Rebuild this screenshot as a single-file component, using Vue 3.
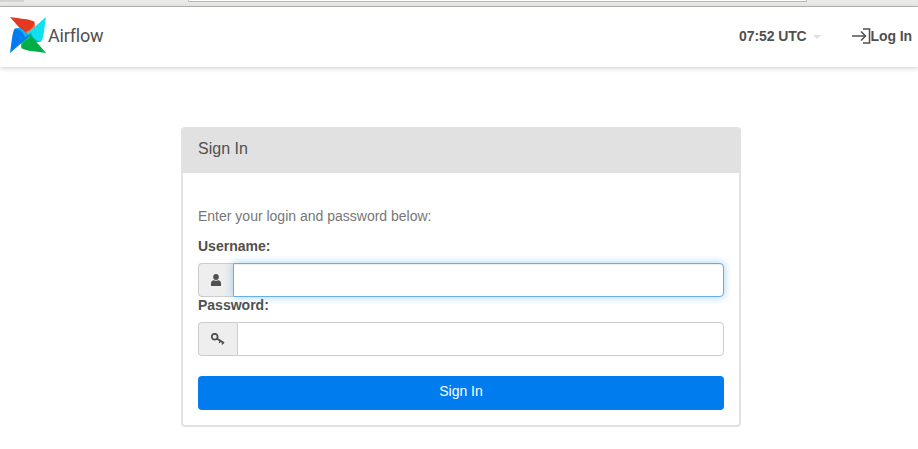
<template>
  <div class="page">
    <div class="browser-strip">
      <div class="browser-strip__tab"></div>
      <div class="browser-strip__address"></div>
    </div>

    <nav class="navbar">
      <a class="brand" href="#">
        <svg class="brand__logo" width="36" height="36" viewBox="0 0 36 36">
          <g v-for="blade in blades" :key="blade.main" :transform="`rotate(${blade.angle} 18 18)`">
            <path d="M0 0 L16.5 19 L18 18 C23 14 27 9 24 4.5 C20 2 9 1.5 0 0Z" :fill="blade.main" />
            <path d="M18 18 C23 14 27 9 24 4.5 C24.5 10 21 13 15.5 15Z" :fill="blade.accent" />
          </g>
        </svg>
        <span class="brand__name">Airflow</span>
      </a>

      <div class="navbar__right">
        <div class="clock">
          <span>07:52 UTC</span>
          <span class="clock__caret"></span>
        </div>
        <a class="login" href="#">
          <svg width="19" height="16" viewBox="0 0 19 16" fill="none" stroke="#51504f" stroke-width="1.5">
            <path d="M0 8 H13" />
            <path d="M9 3.5 L13.5 8 L9 12.5" />
            <path d="M11 1 H17.5 V15 H11" />
          </svg>
          <span>Log In</span>
        </a>
      </div>
    </nav>

    <main class="content">
      <section class="panel">
        <header class="panel__heading">Sign In</header>
        <form class="panel__body" @submit.prevent>
          <p class="panel__hint">Enter your login and password below:</p>

          <label class="field-label" for="username">Username:</label>
          <div class="input-group">
            <span class="input-group__addon input-group__addon--user">
              <svg width="10" height="12" viewBox="0 0 10 12" fill="#51504f">
                <ellipse cx="5" cy="3" rx="2.8" ry="3" />
                <path d="M0 12 V9 C0 7.4 1.4 6.4 3 6.2 C4.2 7 5.8 7 7 6.2 C8.6 6.4 10 7.4 10 9 V12Z" />
              </svg>
            </span>
            <input id="username" v-model="username" class="input-group__input input-group__input--focus" type="text" />
          </div>

          <label class="field-label field-label--password" for="password">Password:</label>
          <div class="input-group">
            <span class="input-group__addon input-group__addon--key">
              <svg width="14" height="12" viewBox="0 0 14 12" fill="none" stroke="#51504f">
                <circle cx="3.7" cy="3.7" r="2.9" stroke-width="1.8" />
                <path d="M5.8 5.5 L13 10" stroke-width="2" />
                <path d="M9.5 7.8 L8.2 9.8 M12 9.5 L11 11.5" stroke-width="1.5" />
              </svg>
            </span>
            <input id="password" v-model="password" class="input-group__input" type="password" />
          </div>

          <button class="submit" type="submit">Sign In</button>
        </form>
      </section>
    </main>
  </div>
</template>

<script setup>
import { ref } from 'vue'

const username = ref('')
const password = ref('')

const blades = [
  { angle: 0, main: '#e43921', accent: '#ff7557' },
  { angle: 90, main: '#11e1ee', accent: '#00b8c9' },
  { angle: 180, main: '#00ad46', accent: '#04d659' },
  { angle: 270, main: '#017cee', accent: '#0cb6ff' }
]
</script>

<style>
html,
body {
  margin: 0;
  background: #fff;
  overflow: hidden;
}
</style>

<style scoped>
.page {
  font-family: "Liberation Sans", Arial, sans-serif;
  font-size: 14px;
  color: #51504f;
  height: 449px;
}

.browser-strip {
  position: relative;
  height: 6px;
  background: #e9e9e7;
  border-bottom: 1px solid #b9b9b5;
  display: flex;
}

.browser-strip__tab {
  width: 24px;
  height: 2px;
  background: #d3d3d1;
}

.browser-strip__address {
  margin-left: 164px;
  width: 617px;
  height: 1px;
  background: #fff;
  border: 1px solid #b5b5b1;
  border-top: 0;
  border-radius: 0 0 3px 3px;
}

.navbar {
  position: relative;
  height: 60px;
  background: #fff;
  box-shadow: 0 1px 5px rgba(0, 0, 0, 0.2);
  display: flex;
  align-items: center;
  justify-content: space-between;
  padding: 0 6px 0 10px;
}

.brand {
  display: flex;
  align-items: center;
  gap: 2px;
  margin-bottom: 4px;
  text-decoration: none;
  color: #51504f;
}

.brand__name {
  font-family: Roboto, sans-serif;
  font-size: 18px;
  letter-spacing: -0.2px;
}

.navbar__right {
  display: flex;
  align-items: center;
  font-weight: 700;
  letter-spacing: -0.1px;
  margin-bottom: 2px;
}

.clock {
  display: flex;
  align-items: center;
  gap: 6px;
  margin-right: 31px;
}

.clock__caret {
  width: 0;
  height: 0;
  border-left: 4px solid transparent;
  border-right: 4px solid transparent;
  border-top: 4px solid #e3dae3;
  margin-top: 2px;
}

.login {
  display: flex;
  align-items: center;
  color: #51504f;
  text-decoration: none;
}

.content {
  display: flex;
  justify-content: center;
  padding-top: 60px;
  padding-left: 4px;
}

.panel {
  width: 560px;
  height: 300px;
  box-sizing: border-box;
  border: 2px solid #e2e2e2;
  border-radius: 4px;
  background: #fff;
}

.panel__heading {
  height: 45px;
  margin: -1px -1px 0;
  padding-top: 11px;
  box-sizing: border-box;
  padding-left: 16px;
  background: #e1e1e1;
  font-size: 16px;
  line-height: 20px;
  border-radius: 3px 3px 0 0;
}

.panel__body {
  padding: 0 15px;
}

.panel__hint {
  margin: 0;
  padding-top: 33px;
  line-height: 20px;
  color: #777;
}

.field-label {
  display: block;
  margin-top: 10px;
  font-weight: 700;
  line-height: 20px;
}

.field-label--password {
  margin-top: -2px;
}

.input-group {
  display: flex;
  height: 34px;
  margin-top: 7px;
}

.input-group__addon {
  box-sizing: border-box;
  display: flex;
  align-items: center;
  justify-content: center;
  background: #eee;
  border: 1px solid #ccc;
  border-right: 0;
  border-radius: 4px 0 0 4px;
}

.input-group__addon--user {
  width: 35px;
}

.input-group__addon--key {
  width: 39px;
}

.input-group__input {
  flex: 1;
  min-width: 0;
  box-sizing: border-box;
  border: 1px solid #ccc;
  border-radius: 0 4px 4px 0;
  outline: none;
  background: #fff;
  padding: 6px 12px;
}

.input-group__input--focus {
  border-color: #66afe9;
  box-shadow: inset 0 1px 1px rgba(0, 0, 0, 0.075), 0 0 8px rgba(102, 175, 233, 0.6);
}

.submit {
  display: block;
  width: 100%;
  height: 34px;
  margin-top: 20px;
  padding: 0 0 4px;
  border: 0;
  border-radius: 4px;
  background: #017cee;
  color: #fff;
  font: 14px "Liberation Sans", Arial, sans-serif;
}
</style>
